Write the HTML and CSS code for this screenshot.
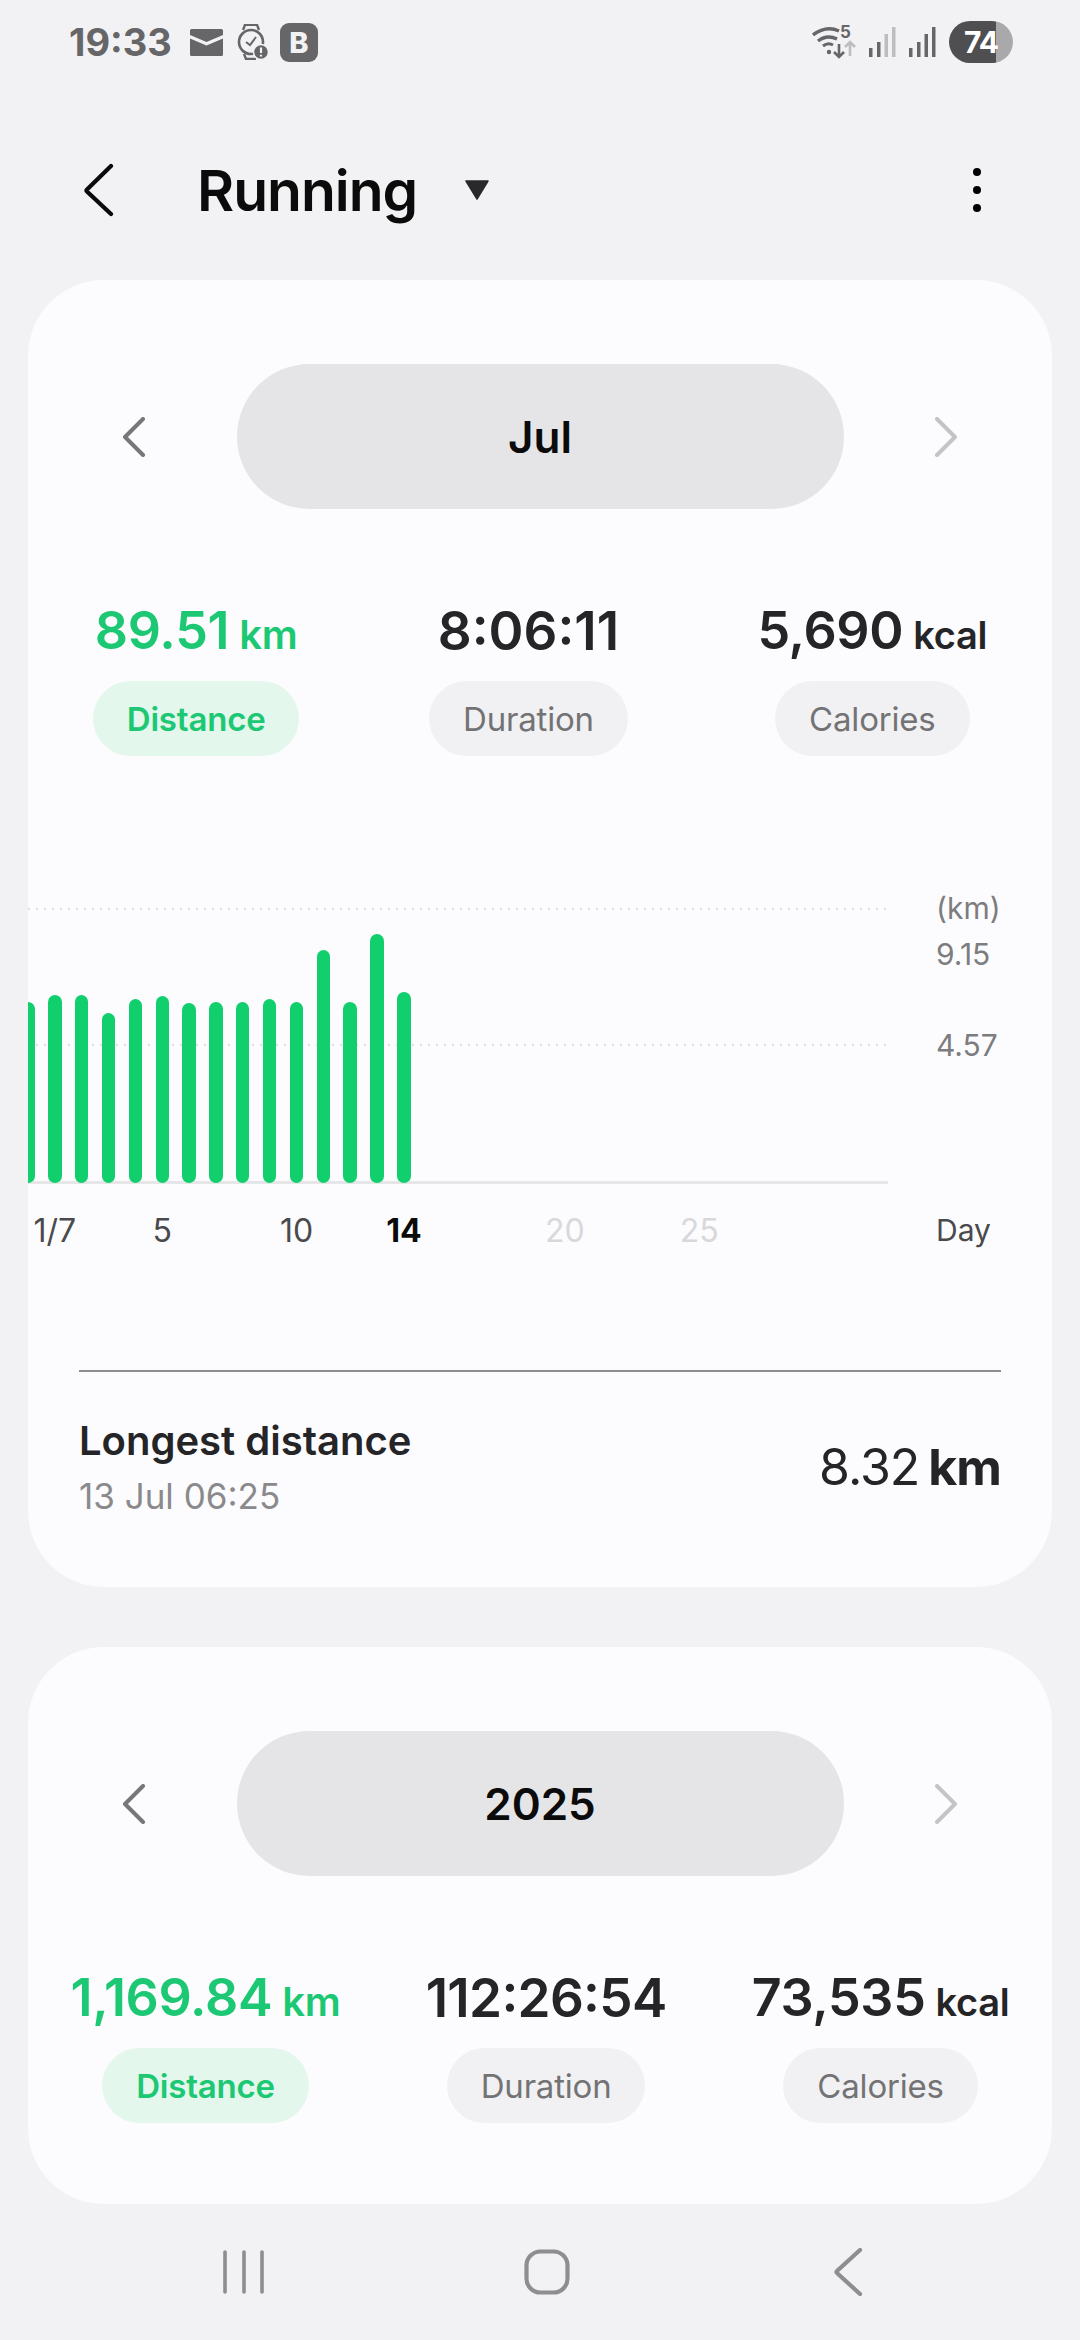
FILE: index.html
```html
<!DOCTYPE html>
<html lang="en">
<head>
  <meta charset="UTF-8" />
  <meta name="viewport" content="width=device-width, initial-scale=1">
  <title>Running</title>
  <link rel="stylesheet" href="styles.css">
</head>

<body>
  <div class="status-bar">
    <div class="status-left">
      <span class="clock">19:33</span>
      <svg class="ic-mail" width="33" height="27" viewBox="0 0 33 27">
        <path d="M0 1.5Q0 0 1.5 0H31.5Q33 0 33 1.5V6L16.5 13L0 6Z" fill="#666668"/>
        <path d="M0 9.5L16.5 16.5L33 9.5V25.5Q33 27 31.5 27H1.5Q0 27 0 25.5Z" fill="#666668"/>
      </svg>
      <svg class="ic-watch" width="32" height="36" viewBox="0 0 32 36">
        <path d="M6 6L8 0.8H20L22 6M7 30L9 35H19" fill="none" stroke="#666668" stroke-width="2.4"/>
        <circle cx="14" cy="18" r="12" fill="none" stroke="#666668" stroke-width="2.6"/>
        <path d="M9 18L13 21L19 13" fill="none" stroke="#666668" stroke-width="2"/>
        <circle cx="24" cy="28" r="7.5" fill="#666668" stroke="#f2f2f4" stroke-width="1.5"/>
        <path d="M24 23.5V29M24 30.8V32.5" stroke="#f2f2f4" stroke-width="2.2"/>
      </svg>
      <span class="badge-b">B</span>
    </div>
    <div class="status-right">
      <svg width="44" height="44" viewBox="0 -4 44 44">
        <path d="M1 11Q14 1 27 7" fill="none" stroke="#666668" stroke-width="3.4"/>
        <path d="M6 17Q15 10 25 15" fill="none" stroke="#666668" stroke-width="3.4"/>
        <path d="M11 22Q16 18 21 21" fill="none" stroke="#666668" stroke-width="3"/>
        <circle cx="17" cy="28" r="2.2" fill="#666668"/>
        <path d="M27 20V33M22 28L27 33L32 28" fill="none" stroke="#666668" stroke-width="2.6"/>
        <path d="M38 32V18M33 23L38 18L43 23" fill="none" stroke="#bdbdbf" stroke-width="2.6"/>
        <text x="28" y="14" class="wifi-five">5</text>
      </svg>
      <svg class="ic-signal" width="28" height="30" viewBox="0 0 28 30">
        <rect x="1" y="21" width="3.5" height="9" fill="#666668"/>
        <rect x="9" y="15" width="3.5" height="15" fill="#666668"/>
        <rect x="16.500" y="7" width="3.5" height="23" fill="#bdbdbf"/>
        <rect x="24" y="0" width="3.500" height="30" fill="#bdbdbf"/>
      </svg>
      <svg class="ic-signal" width="28" height="30" viewBox="0 0 28 30">
        <rect x="1" y="21" width="3.5" height="9" fill="#666668"/>
        <rect x="9" y="15" width="3.5" height="15" fill="#666668"/>
        <rect x="16.500" y="7" width="3.5" height="23" fill="#666668"/>
        <rect x="24" y="0" width="3.500" height="30" fill="#666668"/>
      </svg>
      <div class="battery"><span>74</span></div>
    </div>
  </div>

  <div class="app-bar">
    <svg class="back" width="30" height="54" viewBox="0 0 30 54">
      <path d="M27 3L3 26.500Q2 27.500 3 28.500L27 51" fill="none" stroke="#0a0a0a" stroke-width="4.2" stroke-linecap="round"/>
    </svg>
    <span class="title">Running</span>
    <svg class="caret" width="26" height="20" viewBox="0 0 26 20">
      <path d="M2 1H24L13 19Z" fill="#29292b" stroke="#29292b" stroke-width="1.5" stroke-linejoin="round"/>
    </svg>
    <div class="more"><i></i><i></i><i></i></div>
  </div>

  <div class="card card-month">
    <div class="period">
      <svg width="24" height="40" viewBox="0 0 24 40"><path d="M21 2L3 20L21 38" class="chev"/></svg>
      <div class="period-name">Jul</div>
      <svg width="24" height="40" viewBox="0 0 24 40"><path d="M3 2L21 20L3 38" class="chev off"/></svg>
    </div>

    <div class="stats">
      <div class="stat on">
        <div class="value">89.51<small>km</small></div>
        <div class="pill">Distance</div>
      </div>
      <div class="stat">
        <div class="value time">8:06:11</div>
        <div class="pill">Duration</div>
      </div>
      <div class="stat">
        <div class="value">5,690<small>kcal</small></div>
        <div class="pill">Calories</div>
      </div>
    </div>

    <div class="chart">
      <div class="plot">
        <div class="gridline top"></div>
        <div class="gridline mid"></div>
        <div class="bars">
          <div style="height:181px"></div>
          <div style="height:188px"></div>
          <div style="height:188px"></div>
          <div style="height:170px"></div>
          <div style="height:184px"></div>
          <div style="height:187px"></div>
          <div style="height:180px"></div>
          <div style="height:181px"></div>
          <div style="height:181px"></div>
          <div style="height:184px"></div>
          <div style="height:181px"></div>
          <div style="height:233px"></div>
          <div style="height:181px"></div>
          <div style="height:249px"></div>
          <div style="height:191px"></div>
        </div>
      </div>
      <div class="axis">
        <span class="d2">1/7</span>
        <span class="d6">5</span>
        <span class="d11">10</span>
        <span class="d15 today">14</span>
        <span class="d21 later">20</span>
        <span class="d26 later">25</span>
      </div>
      <span class="y-label y-unit">(km)</span>
      <span class="y-label y-max">9.15</span>
      <span class="y-label y-mid">4.57</span>
      <span class="y-label y-day">Day</span>
    </div>

    <div class="longest">
      <div>
        <div class="longest-title">Longest distance</div>
        <div class="longest-date">13 Jul 06:25</div>
      </div>
      <div class="longest-value">8.32<b>km</b></div>
    </div>
  </div>

  <div class="card card-year">
    <div class="period">
      <svg width="24" height="40" viewBox="0 0 24 40"><path d="M21 2L3 20L21 38" class="chev"/></svg>
      <div class="period-name">2025</div>
      <svg width="24" height="40" viewBox="0 0 24 40"><path d="M3 2L21 20L3 38" class="chev off"/></svg>
    </div>

    <div class="stats">
      <div class="stat on">
        <div class="value">1,169.84<small>km</small></div>
        <div class="pill">Distance</div>
      </div>
      <div class="stat">
        <div class="value time">112:26:54</div>
        <div class="pill">Duration</div>
      </div>
      <div class="stat">
        <div class="value">73,535<small>kcal</small></div>
        <div class="pill">Calories</div>
      </div>
    </div>
  </div>

  <div class="nav-bar">
    <svg width="44" height="46" viewBox="0 0 44 46">
      <path d="M3 3V43M22 3V43M40 3V43" fill="none" stroke="#8e8e90" stroke-width="3.600" stroke-linecap="round"/>
    </svg>
    <svg class="nav-home" width="46" height="46" viewBox="0 0 46 46">
      <rect x="2.500" y="2.500" width="41" height="41" rx="14" fill="none" stroke="#8e8e90" stroke-width="4.200"/>
    </svg>
    <svg width="30" height="48" viewBox="0 0 30 48">
      <path d="M27 2L4 23Q3 24 4 25L27 46" fill="none" stroke="#8e8e90" stroke-width="4.200" stroke-linecap="round"/>
    </svg>
  </div>
</body>
</html>
```

FILE: styles.css
```css
html, body {
  margin: 0;
  padding: 0;
}

body {
  width: 1080px;
  height: 2340px;
  overflow: hidden;
  background: #f2f2f4;
  font-family: Inter, "Noto Sans", sans-serif;
  color: #252528;
}

/* status bar */
.status-bar {
  height: 84px;
  padding: 0 67px 0 69px;
  box-sizing: border-box;
  display: flex;
  justify-content: space-between;
  align-items: center;
}

.status-left, .status-right {
  display: flex;
  align-items: center;
}

.clock {
  font-size: 38px;
  font-weight: 700;
  color: #666668;
}

.ic-mail { margin-left: 18px; }
.ic-watch { margin-left: 14px; }

.badge-b {
  margin-left: 11px;
  width: 38px;
  height: 39px;
  border-radius: 9px;
  background: #666668;
  color: #f2f2f4;
  font-size: 29px;
  font-weight: 800;
  display: flex;
  align-items: center;
  justify-content: center;
}

.wifi-five {
  font-size: 17px;
  font-weight: 700;
  fill: #666668;
}

.ic-signal { margin-left: 12px; }

.battery {
  margin-left: 13px;
  width: 64px;
  height: 42px;
  border-radius: 21px;
  background: linear-gradient(90deg, #4f4f51 0 47px, #a9a9ab 47px);
  display: flex;
  align-items: center;
  justify-content: center;
  color: #fff;
  font-size: 30px;
  font-weight: 700;
  letter-spacing: -1px;
}

/* title row */
.app-bar {
  height: 196px;
  padding: 16px 0 0 84px;
  box-sizing: border-box;
  display: flex;
  align-items: center;
}

.title {
  margin-left: 83px;
  font-size: 57px;
  font-weight: 600;
  letter-spacing: -1px;
  color: #0b0b0b;
}

.caret { margin-left: 47px; }

.more {
  margin-left: auto;
  margin-right: 99px;
  display: flex;
  flex-direction: column;
  gap: 10px;
}

.more i {
  width: 8px;
  height: 8px;
  border-radius: 50%;
  background: #000;
}

/* cards */
.card {
  margin: 0 28px;
  background: #fcfcfe;
  border-radius: 76px;
  overflow: hidden;
}

.card-month { height: 1307px; }
.card-year { height: 557px; margin-top: 60px; }

.period {
  margin-top: 84px;
  padding: 0 94px;
  display: flex;
  justify-content: space-between;
  align-items: center;
}

.chev {
  fill: none;
  stroke: #77777a;
  stroke-width: 4;
  stroke-linecap: round;
  stroke-linejoin: round;
}

.chev.off { stroke: #c4c4c6; }

.period-name {
  width: 607px;
  height: 145px;
  border-radius: 73px;
  background: #e5e5e7;
  color: #0b0b0b;
  font-size: 44px;
  font-weight: 600;
  display: flex;
  align-items: center;
  justify-content: center;
}

.stats {
  margin-top: 92px;
  display: flex;
  justify-content: space-around;
}

.stat {
  display: flex;
  flex-direction: column;
  align-items: center;
}

.value {
  height: 60px;
  font-size: 52px;
  line-height: 60px;
  font-weight: 600;
  letter-spacing: -0.3px;
  white-space: nowrap;
}

.value.time {
  font-size: 53px;
  letter-spacing: 0;
  font-feature-settings: "case";
}

.card-year .value.time { letter-spacing: -0.7px; }

.value small {
  margin-left: 10px;
  font-size: 38px;
  font-weight: 600;
}

.stat.on .value small { font-size: 40px; }

.pill {
  margin-top: 20px;
  height: 75px;
  padding: 0 34px;
  border-radius: 38px;
  background: #f1f1f3;
  color: #737375;
  font-size: 33px;
  letter-spacing: -0.2px;
  display: flex;
  align-items: center;
}

.stat.on .value { color: #1cc873; }

.stat.on .pill {
  background: #e3f7ec;
  color: #1cc873;
  font-weight: 600;
}

/* chart */
.chart {
  margin-top: 124px;
  height: 370px;
  padding-top: 28px;
  box-sizing: border-box;
  position: relative;
}

.plot {
  width: 860px;
  height: 276px;
  box-sizing: border-box;
  border-bottom: 3px solid #e6e6e8;
  position: relative;
  display: flex;
  align-items: flex-end;
}

.gridline {
  position: absolute;
  left: 0;
  width: 864px;
  height: 2px;
  background: repeating-linear-gradient(90deg, #dcdcde 0 2px, transparent 2px 8px);
}

.gridline.top { top: 0; }
.gridline.mid { top: 136px; }

.bars {
  margin-left: -13.4px;
  margin-bottom: -2px;
  height: 100%;
  display: grid;
  grid-template-columns: repeat(32, 26.85px);
  align-items: end;
  position: relative;
}

.bars div {
  width: 13.4px;
  justify-self: center;
  border-radius: 7px;
  background: #12cf6e;
}

.axis {
  margin-top: 27px;
  margin-left: -13.4px;
  display: grid;
  grid-template-columns: repeat(32, 26.85px);
  font-size: 32px;
  line-height: 40px;
  color: #4a4a4c;
}

.axis span {
  grid-row: 1;
  justify-self: center;
  white-space: nowrap;
}

.d2 { grid-column: 2; }
.d6 { grid-column: 6; }
.d11 { grid-column: 11; }
.d15 { grid-column: 15; }
.d21 { grid-column: 21; }
.d26 { grid-column: 26; }

.axis .today {
  color: #0b0b0b;
  font-weight: 700;
}

.axis .later { color: #d8d8da; }

.y-label {
  position: absolute;
  left: 908px;
  font-size: 30px;
  line-height: 40px;
  color: #7d7d80;
}

.y-unit { top: 8px; }
.y-max { top: 54px; }
.y-mid { top: 145px; }

.y-day {
  top: 330px;
  color: #4a4a4c;
}

/* longest distance */
.longest {
  margin: 120px 51px 0;
  padding-top: 44px;
  border-top: 2px solid #8d8d8f;
  display: flex;
  justify-content: space-between;
  align-items: center;
}

.longest-title {
  font-size: 40px;
  line-height: 50px;
  font-weight: 600;
}

.longest-date {
  margin-top: 8px;
  font-size: 35px;
  line-height: 44px;
  color: #8a8a8c;
}

.longest-value {
  font-size: 50px;
  letter-spacing: -1px;
}

.longest-value b {
  margin-left: 9px;
  font-weight: 700;
}

/* nav */
.nav-bar {
  height: 136px;
  padding: 0 217px 0 222px;
  box-sizing: border-box;
  display: flex;
  justify-content: space-between;
  align-items: center;
}

.nav-home { margin-right: 6px; }
```
